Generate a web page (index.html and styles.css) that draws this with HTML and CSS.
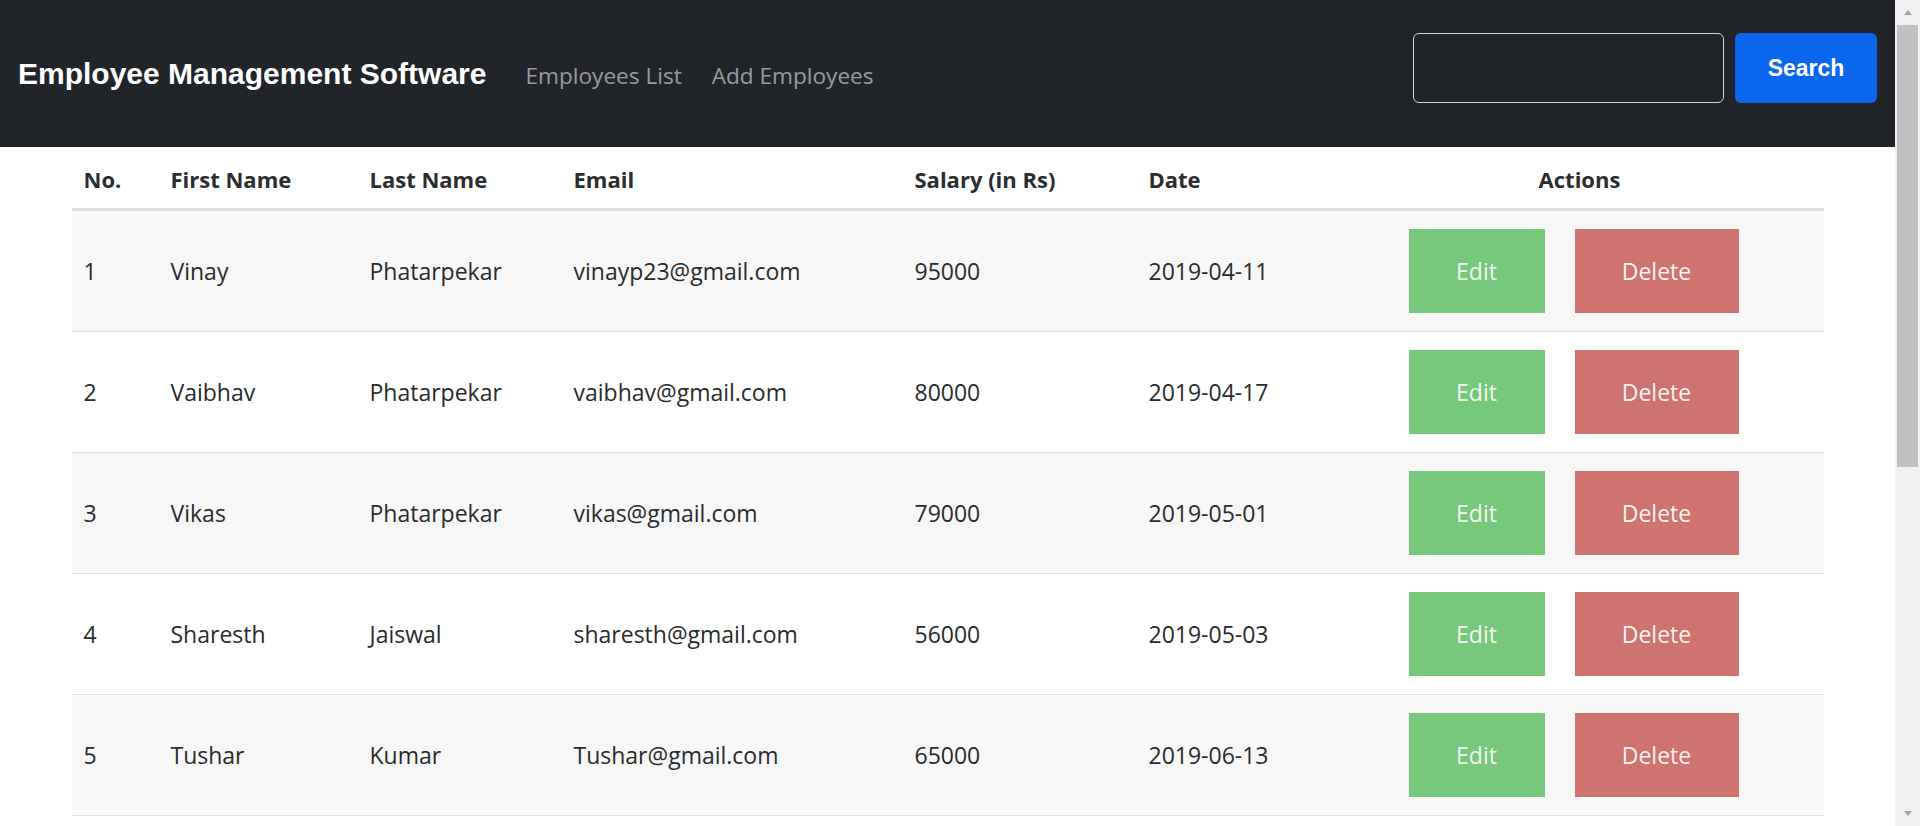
FILE: index.html
```html
<!DOCTYPE html>
<html lang="en">
<head>
<meta charset="utf-8">
<title>Employee Management Software</title>
<link rel="stylesheet" href="styles.css">
</head>
<body>
<div class="window">
  <div class="page">
    <nav class="navbar">
      <div class="nav-left">
        <a class="brand" href="#">Employee Management Software</a>
        <a class="nav-link" href="#">Employees List</a>
        <a class="nav-link" href="#">Add Employees</a>
      </div>
      <form class="search-form">
        <input class="search-input" type="search" aria-label="Search">
        <button class="search-btn" type="button">Search</button>
      </form>
    </nav>
    <main class="content">
      <table class="emp-table">
        <colgroup>
          <col class="c-no"><col class="c-first"><col class="c-last"><col class="c-email"><col class="c-salary"><col class="c-date"><col class="c-actions">
        </colgroup>
        <thead>
          <tr><th>No.</th><th>First Name</th><th>Last Name</th><th>Email</th><th>Salary (in Rs)</th><th>Date</th><th class="th-actions">Actions</th></tr>
        </thead>
        <tbody>
          <tr><td>1</td><td>Vinay</td><td>Phatarpekar</td><td>vinayp23@gmail.com</td><td>95000</td><td>2019-04-11</td><td class="actions"><div class="btns"><button class="btn edit">Edit</button><button class="btn del">Delete</button></div></td></tr>
          <tr><td>2</td><td>Vaibhav</td><td>Phatarpekar</td><td>vaibhav@gmail.com</td><td>80000</td><td>2019-04-17</td><td class="actions"><div class="btns"><button class="btn edit">Edit</button><button class="btn del">Delete</button></div></td></tr>
          <tr><td>3</td><td>Vikas</td><td>Phatarpekar</td><td>vikas@gmail.com</td><td>79000</td><td>2019-05-01</td><td class="actions"><div class="btns"><button class="btn edit">Edit</button><button class="btn del">Delete</button></div></td></tr>
          <tr><td>4</td><td>Sharesth</td><td>Jaiswal</td><td>sharesth@gmail.com</td><td>56000</td><td>2019-05-03</td><td class="actions"><div class="btns"><button class="btn edit">Edit</button><button class="btn del">Delete</button></div></td></tr>
          <tr><td>5</td><td>Tushar</td><td>Kumar</td><td>Tushar@gmail.com</td><td>65000</td><td>2019-06-13</td><td class="actions"><div class="btns"><button class="btn edit">Edit</button><button class="btn del">Delete</button></div></td></tr>
        </tbody>
      </table>
    </main>
  </div>
  <div class="scrollbar" aria-hidden="true">
    <div class="sb-btn"><span class="sb-arrow up"></span></div>
    <div class="sb-track">
      <div class="sb-thumb"></div>
    </div>
    <div class="sb-btn"><span class="sb-arrow down"></span></div>
  </div>
</div>
</body>
</html>
```
FILE: styles.css
```css
html, body {
  margin: 0;
  padding: 0;
  height: 100%;
  overflow: hidden;
}
body {
  font-family: "Open Sans", "Noto Sans", sans-serif;
  color: #292b2c;
  background: #fff;
}

.window {
  display: flex;
  height: 100vh;
}
.page {
  flex: 1;
  min-width: 0;
  overflow: hidden;
}

/* browser-style scrollbar */
.scrollbar {
  width: 25px;
  flex: none;
  display: flex;
  flex-direction: column;
  background: #f1f1f1;
}
.sb-btn {
  height: 25px;
  flex: none;
  display: flex;
  align-items: center;
  justify-content: center;
}
.sb-arrow {
  width: 0;
  height: 0;
  border-left: 4px solid transparent;
  border-right: 4px solid transparent;
}
.sb-arrow.up {
  border-bottom: 5px solid #a3a3a3;
}
.sb-arrow.down {
  border-top: 5px solid #a3a3a3;
}
.sb-track {
  flex: 1;
  padding: 0 2px;
}
.sb-thumb {
  height: 442px;
  background: #c1c1c1;
}

/* navbar */
.navbar {
  display: flex;
  align-items: center;
  justify-content: space-between;
  height: 147px;
  box-sizing: border-box;
  padding: 0 18px;
  background: #212529;
}
.nav-left {
  display: flex;
  align-items: baseline;
}
.brand {
  font-family: "Liberation Sans", Arial, sans-serif;
  font-weight: bold;
  font-size: 30px;
  line-height: 34px;
  color: #fff;
  text-decoration: none;
  margin-right: 24px;
}
.nav-link {
  font-size: 22.6px;
  line-height: 31px;
  color: rgba(255, 255, 255, 0.55);
  text-decoration: none;
  padding: 0 15px;
}
.search-form {
  display: flex;
  gap: 11px;
  margin-bottom: 11px;
}
.search-input {
  width: 311px;
  height: 70px;
  box-sizing: border-box;
  background: transparent;
  border: 1px solid #d4d4d4;
  border-radius: 6px;
  outline: none;
  margin: 0;
}
.search-btn {
  width: 142px;
  height: 70px;
  border: none;
  border-radius: 6px;
  background: #0a66ee;
  color: #fff;
  font-family: "Liberation Sans", Arial, sans-serif;
  font-weight: bold;
  font-size: 23px;
  margin: 0;
  padding: 0;
}

/* table */
.emp-table {
  width: 1752px;
  margin: 0 auto;
  border-collapse: collapse;
  table-layout: fixed;
}
.c-no { width: 87px; }
.c-first { width: 199px; }
.c-last { width: 204px; }
.c-email { width: 341px; }
.c-salary { width: 234px; }
.c-date { width: 199px; }
.c-actions { width: 488px; }

.emp-table th {
  height: 62px;
  box-sizing: border-box;
  padding: 3px 12px 0;
  text-align: left;
  font-weight: bold;
  font-size: 22px;
  color: #2b2d2f;
  border-bottom: 3px solid #dcdcdc;
  vertical-align: middle;
}
.emp-table th.th-actions {
  text-align: center;
}
.emp-table td {
  padding: 18px 12px 18.2px;
  font-size: 23px;
  vertical-align: middle;
  border-bottom: 1px solid #dee2e6;
  white-space: nowrap;
}
.emp-table tbody tr:nth-child(odd) {
  background: #f7f7f7;
}
.emp-table td.actions {
  padding-right: 24px;
}
.btns {
  display: flex;
  justify-content: center;
  gap: 30px;
}
.btn {
  height: 84px;
  border: none;
  border-radius: 0;
  margin: 0;
  padding: 0;
  color: rgba(255, 255, 255, 0.93);
  font-family: "Open Sans", "Noto Sans", sans-serif;
  font-size: 23px;
}
.btn.edit {
  width: 136px;
  background: #77c77c;
}
.btn.del {
  width: 164px;
  background: #d07472;
}
```
